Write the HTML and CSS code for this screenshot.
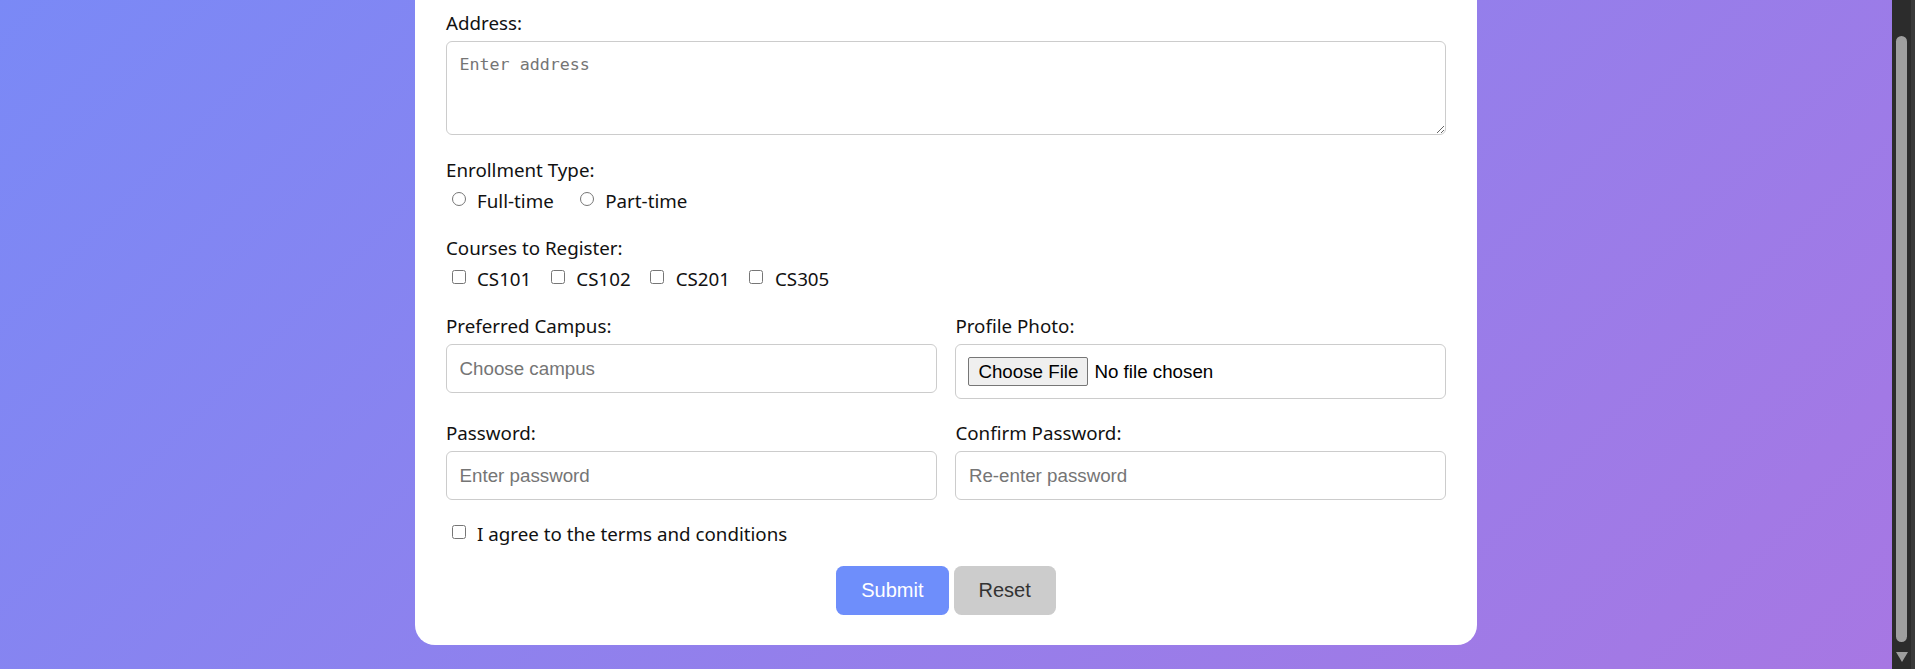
FILE: index.html
```html
<!DOCTYPE html>
<html lang="en">
<head>
<meta charset="utf-8">
<title>Student Registration</title>
<link rel="stylesheet" href="styles.css">
</head>
<body>
<div class="page">
  <main class="card">
    <form class="form">
      <div class="group">
        <label class="label" for="address">Address:</label>
        <textarea id="address" class="textarea" placeholder="Enter address"></textarea>
      </div>

      <div class="group">
        <span class="label">Enrollment Type:</span>
        <div class="options options-radio">
          <label class="opt"><input type="radio" name="enroll"><span>Full-time</span></label>
          <label class="opt"><input type="radio" name="enroll"><span>Part-time</span></label>
        </div>
      </div>

      <div class="group">
        <span class="label">Courses to Register:</span>
        <div class="options options-check">
          <label class="opt"><input type="checkbox"><span>CS101</span></label>
          <label class="opt"><input type="checkbox"><span>CS102</span></label>
          <label class="opt"><input type="checkbox"><span>CS201</span></label>
          <label class="opt"><input type="checkbox"><span>CS305</span></label>
        </div>
      </div>

      <div class="grid">
        <div class="field">
          <label class="label" for="campus">Preferred Campus:</label>
          <input id="campus" class="input" type="text" placeholder="Choose campus">
        </div>
        <div class="field">
          <label class="label" for="photo">Profile Photo:</label>
          <input id="photo" class="file" type="file">
        </div>
        <div class="field">
          <label class="label" for="pw">Password:</label>
          <input id="pw" class="input" type="password" placeholder="Enter password">
        </div>
        <div class="field">
          <label class="label" for="pw2">Confirm Password:</label>
          <input id="pw2" class="input" type="password" placeholder="Re-enter password">
        </div>
      </div>

      <div class="group terms">
        <label class="opt"><input type="checkbox"><span>I agree to the terms and conditions</span></label>
      </div>

      <div class="actions">
        <button type="submit" class="btn btn-primary">Submit</button>
        <button type="reset" class="btn btn-secondary">Reset</button>
      </div>
    </form>
  </main>
</div>
<aside class="scrollbar" aria-hidden="true">
  <div class="thumb"></div>
  <svg class="arrow" width="12" height="10" viewBox="0 0 12 10"><polygon points="0,0 12,0 6,10" fill="#9e9e9e"/></svg>
</aside>
</body>
</html>
```

FILE: styles.css
```css
html, body {
  margin: 0;
  padding: 0;
  height: 100%;
  overflow: hidden;
}

body {
  display: flex;
  font-family: "Noto Sans", "Open Sans", sans-serif;
  color: #111;
}

.page {
  flex: 1;
  display: flex;
  justify-content: center;
  align-items: flex-start;
  background: linear-gradient(135deg, #6e8efb, #a777e3) left bottom / 100% 1350px no-repeat;
}

.card {
  width: 1062.5px;
  box-sizing: border-box;
  background: #fff;
  border-radius: 0 0 20px 20px;
  padding: 9.8px 31.25px 30px;
}

.form {
  display: flex;
  flex-direction: column;
}

.group {
  margin-bottom: 21.5px;
}

.label {
  display: block;
  font-size: 18.75px;
  line-height: 25px;
  margin-bottom: 6.5px;
}

.textarea {
  display: block;
  width: 100%;
  height: 94px;
  box-sizing: border-box;
  border: 1px solid #ccc;
  border-radius: 6px;
  padding: 12.5px;
  font-family: "DejaVu Sans Mono", monospace;
  font-size: 16.67px;
  color: #111;
  resize: vertical;
}

.textarea::placeholder,
.input::placeholder {
  color: #757575;
}

.options {
  display: flex;
  height: 25px;
}

.options-radio {
  margin-top: 3.5px;
}

.options-check {
  margin-top: 2px;
}

.opt {
  display: flex;
  align-items: flex-start;
  font-size: 18.75px;
  line-height: 25px;
  margin-right: 14px;
}

.options-radio .opt {
  margin-right: 20.5px;
}

.opt input {
  flex: none;
  width: 14px;
  height: 14px;
  margin: 4px 11.5px 0 5.5px;
}

.grid {
  display: grid;
  grid-template-columns: 1fr 1fr;
  column-gap: 18.75px;
  row-gap: 20.5px;
  margin-bottom: 21px;
}

.input {
  display: block;
  width: 100%;
  box-sizing: border-box;
  border: 1px solid #ccc;
  border-radius: 6px;
  padding: 12.5px;
  font-family: "Liberation Sans", Arial, sans-serif;
  font-size: 18.75px;
  line-height: 22px;
  color: #111;
  background: #fff;
}

.file {
  display: block;
  width: 100%;
  box-sizing: border-box;
  border: 1px solid #ccc;
  border-radius: 6px;
  padding: 12px;
  font-family: "Liberation Sans", Arial, sans-serif;
  font-size: 18.75px;
  line-height: 23px;
  color: #000;
  background: #fff;
}

.file::file-selector-button {
  font: inherit;
  line-height: 23px;
  padding: 2px 9px;
  margin: 0 6px 0 0;
  border: 1px solid #767676;
  border-radius: 2px;
  background: #efefef;
  color: #000;
}

.terms {
  margin-bottom: 19.5px;
}

.actions {
  display: flex;
  justify-content: center;
  gap: 5px;
}

.btn {
  border: none;
  border-radius: 7.5px;
  padding: 13px 25px;
  font-family: "Liberation Sans", Arial, sans-serif;
  font-size: 20px;
  line-height: 23px;
  cursor: pointer;
}

.btn-primary {
  background: #6e8efb;
  color: #fff;
}

.btn-secondary {
  background: #ccc;
  color: #333;
}

.scrollbar {
  flex: none;
  width: 23px;
  box-sizing: border-box;
  background: linear-gradient(to right, #2c2c2c 19px, #3a3a3a 19px);
  display: flex;
  flex-direction: column;
  padding: 36px 0 0 4px;
}

.thumb {
  width: 11px;
  height: 606px;
  border-radius: 6px;
  background: #9f9f9f;
}

.arrow {
  display: block;
  margin-top: 10px;
}
```
